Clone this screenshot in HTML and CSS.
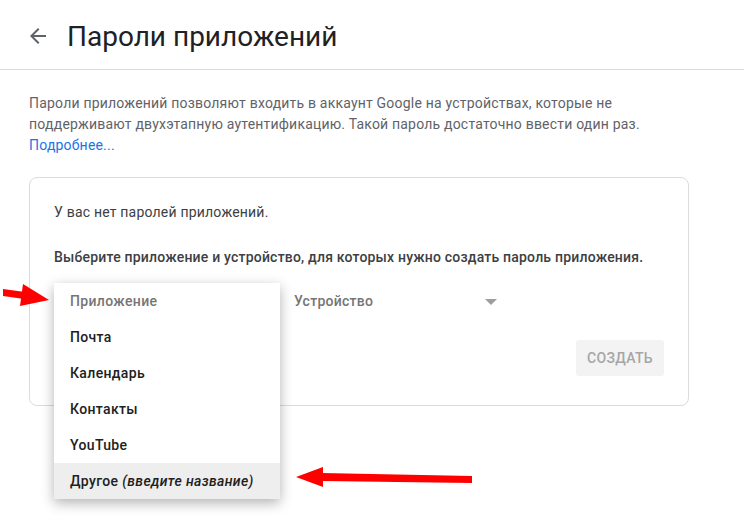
FILE: index.html
```html
<!DOCTYPE html>
<html lang="ru">
<head>
    <meta charset="UTF-8">
    <meta name="viewport" content="width=device-width, initial-scale=1.0">
    <title>Пароли приложений</title>
    <link rel="stylesheet" href="styles.css">
</head>
<body>
    <div class="header">
        <span class="back">
            <svg width="24" height="24" viewBox="0 0 24 24"><path d="M20 11H7.83l5.59-5.59L12 4l-8 8 8 8 1.41-1.41L7.83 13H20v-2z" fill="#5f6368"/></svg>
        </span>
        <h1 class="title">Пароли приложений</h1>
    </div>

    <div class="content">
        <p class="intro">
            Пароли приложений позволяют входить в аккаунт Google на устройствах, которые не
            поддерживают двухэтапную аутентификацию. Такой пароль достаточно ввести один раз.
            <br><a href="#">Подробнее...</a>
        </p>

        <div class="card">
            <p class="empty">У вас нет паролей приложений.</p>
            <p class="choose">Выберите приложение и устройство, для которых нужно создать пароль приложения.</p>

            <div class="selects">
                <!-- app select is open, its menu covers it -->
                <div class="select open"></div>
                <div class="select">
                    <span>Устройство</span>
                    <span class="caret"></span>
                </div>

                <ul class="menu">
                    <li class="placeholder">Приложение</li>
                    <li>Почта</li>
                    <li>Календарь</li>
                    <li>Контакты</li>
                    <li>YouTube</li>
                    <li class="active">Другое <i>(введите название)</i></li>
                </ul>
            </div>

            <div class="actions">
                <button class="create">Создать</button>
            </div>
        </div>
    </div>

    <!-- red annotation arrows -->
    <svg class="note" width="744" height="530" viewBox="0 0 744 530">
        <polygon points="3,289 25,292 24,299 3,296" fill="#ff0000"/>
        <polygon points="23,284 49,300 20,306" fill="#ff0000"/>
        <polygon points="322,473 472,476 472,483 322,481" fill="#ff0000"/>
        <polygon points="296,477 323,467 323,487" fill="#ff0000"/>
    </svg>
</body>
</html>
```

FILE: styles.css
```css
body {
    margin: 0;
    font-family: Roboto, "Liberation Sans", Arial, sans-serif;
    background-color: #ffffff;
    color: #202124;
    position: relative;
    width: 744px;
    height: 530px;
    overflow: hidden;
}

.header {
    display: flex;
    align-items: center;
    height: 70px;
    padding-left: 26px;
    border-bottom: 1px solid #dadce0;
    box-sizing: border-box;
    padding-top: 3px;
}

.back {
    display: flex;
    width: 24px;
    height: 24px;
    margin-right: 17px;
}

.title {
    margin: 0;
    font-size: 28px;
    font-weight: 400;
    color: #202124;
}

.content {
    padding: 23px 0 0 29px;
    width: 660px;
}

.intro {
    margin: 0 0 21px 0;
    font-size: 14px;
    line-height: 21px;
    letter-spacing: 0.2px;
    color: #5f6368;
}

.intro a {
    color: #1a73e8;
    text-decoration: none;
}

.card {
    border: 1px solid #dadce0;
    border-radius: 8px;
    padding: 24px 24px 29px 24px;
}

.empty {
    margin: 0 0 25px 0;
    font-size: 14px;
    line-height: 20px;
    letter-spacing: 0.2px;
    color: #3c4043;
}

.choose {
    margin: 0 0 16px 0;
    font-size: 14px;
    line-height: 20px;
    font-weight: 500;
    letter-spacing: 0.2px;
    color: #3c4043;
}

.selects {
    position: relative;
    display: flex;
    gap: 37px;
    height: 36px;
}

.select {
    width: 203px;
    display: flex;
    align-items: center;
    justify-content: space-between;
    font-size: 14px;
    font-weight: 500;
    letter-spacing: 0.25px;
    color: #757575;
}

.caret {
    width: 0;
    height: 0;
    border-left: 6px solid transparent;
    border-right: 6px solid transparent;
    border-top: 6px solid #9e9e9e;
    margin-top: 2px;
}

.menu {
    position: absolute;
    top: 0;
    left: 0;
    width: 226px;
    margin: 0;
    padding: 0;
    list-style: none;
    background-color: #ffffff;
    box-shadow: 0 4px 12px rgba(0, 0, 0, 0.3);
    z-index: 2;
}

.menu li {
    height: 36px;
    line-height: 36px;
    padding-left: 16px;
    font-size: 14px;
    font-weight: 500;
    letter-spacing: 0.35px;
    color: #212121;
}

.menu li.placeholder {
    color: #757575;
}

.menu li.active {
    background-color: #eeeeee;
}

.actions {
    display: flex;
    justify-content: flex-end;
    margin-top: 21px;
}

.create {
    width: 88px;
    height: 36px;
    border: none;
    border-radius: 3px;
    background-color: #f3f3f3;
    color: #a6a6a6;
    font-family: Roboto, "Liberation Sans", Arial, sans-serif;
    font-size: 14px;
    font-weight: 500;
    letter-spacing: 0.3px;
    text-transform: uppercase;
}

/* annotation overlay */
.note {
    position: absolute;
    top: 0;
    left: 0;
    pointer-events: none;
    z-index: 5;
}
```
